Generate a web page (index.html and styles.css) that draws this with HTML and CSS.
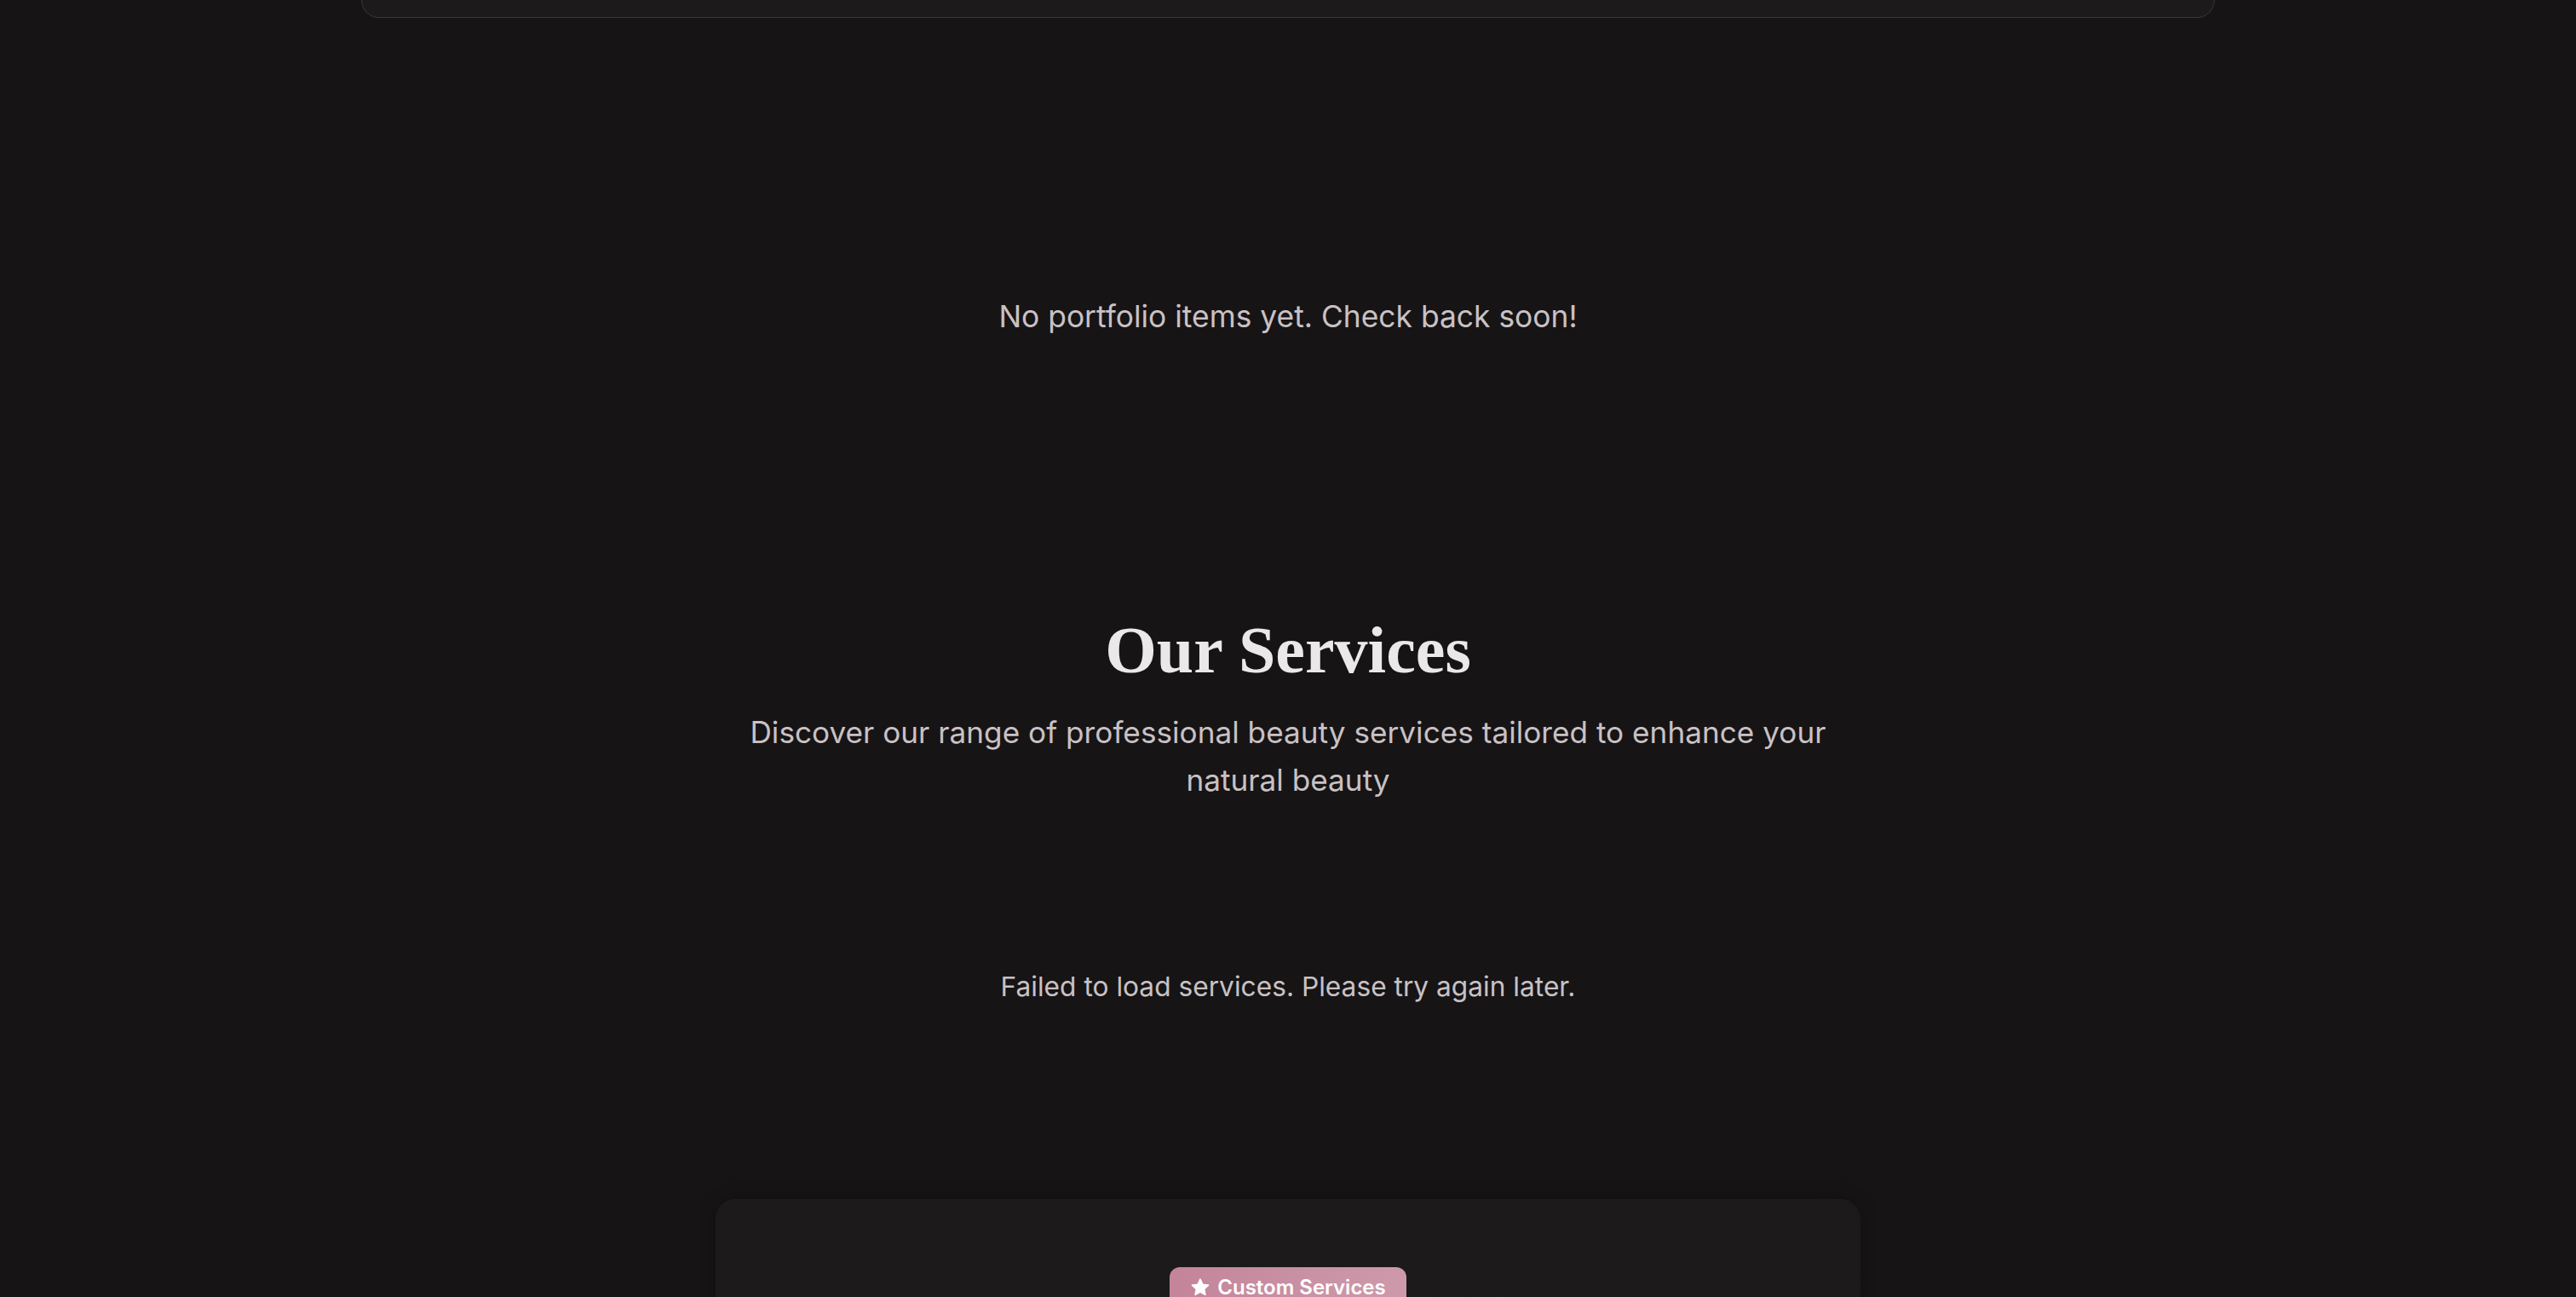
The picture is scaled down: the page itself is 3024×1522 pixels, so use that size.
FILE: index.html
```html
<!DOCTYPE html>
<html lang="en">
<head>
<meta charset="utf-8">
<title>Our Services</title>
<link rel="stylesheet" href="styles.css">
</head>
<body>
<div class="page">
  <div class="top-card"></div>

  <section class="portfolio">
    <p class="empty-note">No portfolio items yet. Check back soon!</p>
  </section>

  <section class="services">
    <h2 class="services-title">Our Services</h2>
    <p class="services-sub">Discover our range of professional beauty services tailored to enhance your natural beauty</p>
    <p class="services-error">Failed to load services. Please try again later.</p>

    <div class="custom-card">
      <span class="badge">
        <svg class="badge-star" viewBox="0 0 24 24" aria-hidden="true"><path d="M12 2.2l2.9 6.1 6.6.8-4.9 4.6 1.3 6.6L12 17l-5.9 3.3 1.3-6.6-4.9-4.6 6.6-.8z" fill="#fff" stroke="#fff" stroke-width="1.6" stroke-linejoin="round"/></svg>
        Custom Services
      </span>
    </div>
  </section>
</div>
</body>
</html>
```

FILE: styles.css
```css
* { box-sizing: border-box; }
html, body {
  margin: 0;
  padding: 0;
  background: #161415;
}
body {
  font-family: Inter, "Noto Sans", sans-serif;
  color: #c9c1c4;
  height: 1522px;
  overflow: hidden;
}
.page {
  display: flex;
  flex-direction: column;
  align-items: center;
}
.top-card {
  width: 2176px;
  height: 21px;
  background: #1c1a1b;
  border: 1px solid #3b3637;
  border-top: none;
  border-radius: 0 0 24px 24px;
}
.portfolio {
  padding-top: 323px;
  display: flex;
  justify-content: center;
}
.empty-note {
  margin: 0;
  font-size: 35.4px;
  line-height: 56px;
  color: #c9c1c4;
}
.services {
  padding-top: 318px;
  display: flex;
  flex-direction: column;
  align-items: center;
  width: 100%;
}
.services-title {
  margin: 0;
  font-family: "Liberation Serif", "Times New Roman", serif;
  font-weight: 700;
  font-size: 78px;
  line-height: 90px;
  color: #ebe8e9;
}
.services-sub {
  margin: 23px 0 0;
  max-width: 1344px;
  text-align: center;
  font-size: 35.2px;
  line-height: 56px;
  color: #c9c1c4;
}
.services-error {
  margin: 191px 0 0;
  font-size: 31.7px;
  line-height: 48px;
  color: #c9c1c4;
}
.custom-card {
  margin-top: 225px;
  width: 1344px;
  height: 400px;
  padding-top: 80px;
  border-radius: 24px;
  background: linear-gradient(135deg, #1c1a1b, #1b191a);
  box-shadow: 0 0 20px rgba(0, 0, 0, 0.25);
  display: flex;
  justify-content: center;
  align-items: flex-start;
}
.badge {
  display: inline-flex;
  align-items: center;
  gap: 8px;
  padding: 8px 24px;
  border-radius: 12px;
  background: linear-gradient(90deg, #c4849a, #cd9aab);
  color: #ffffff;
  font-size: 24px;
  line-height: 32px;
  font-weight: 600;
}
.badge-star {
  width: 24px;
  height: 24px;
}
```
